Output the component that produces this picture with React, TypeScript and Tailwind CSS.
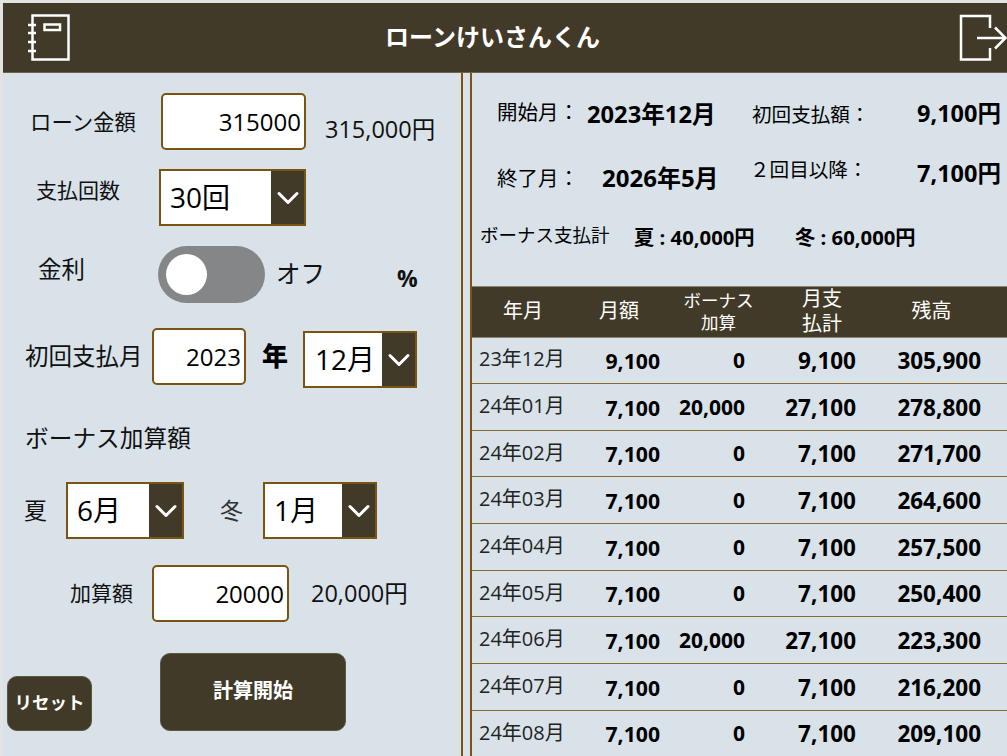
import React from 'react';
import { ChevronDown } from 'lucide-react';

const rows = [
  ['23年12月', '9,100', '0', '9,100', '305,900'],
  ['24年01月', '7,100', '20,000', '27,100', '278,800'],
  ['24年02月', '7,100', '0', '7,100', '271,700'],
  ['24年03月', '7,100', '0', '7,100', '264,600'],
  ['24年04月', '7,100', '0', '7,100', '257,500'],
  ['24年05月', '7,100', '0', '7,100', '250,400'],
  ['24年06月', '7,100', '20,000', '27,100', '223,300'],
  ['24年07月', '7,100', '0', '7,100', '216,200'],
  ['24年08月', '7,100', '0', '7,100', '209,100'],
];

const TextBox = ({ value, className }: { value: string; className: string }) => (
  <div className={`h-[57px] bg-white border-2 border-[#7b5412] rounded-[5px] flex items-center justify-end pr-[3px] text-[24px] text-black ${className}`}>
    {value}
  </div>
);

const Select = ({ value, className, pad }: { value: string; className: string; pad: string }) => (
  <div className={`h-[57px] bg-white border-2 border-[#7b5412] flex items-stretch text-[28px] text-black ${className}`}>
    <div className={`flex-1 flex items-center pb-[2px] ${pad}`}>{value}</div>
    <div className="w-[33px] bg-[#423a28] flex items-center justify-center">
      <ChevronDown size={36} strokeWidth={2} className="text-white shrink-0" />
    </div>
  </div>
);

export default function App() {
  return (
    <div
      className="w-[1007px] h-[756px] overflow-hidden bg-[#e3e3e3] pt-[3px] pl-[3px] text-black"
      style={{ fontFamily: '"Open Sans", "Noto Sans CJK JP", sans-serif' }}
    >
      {/* Header */}
      <header className="h-[70px] bg-[#423a28] border-b border-[#6b6350] flex items-center justify-between pl-[25px] text-white">
        <svg width="44" height="48" viewBox="0 0 44 48" fill="none" stroke="currentColor" strokeWidth="2.5">
          <rect x="4.5" y="1.5" width="36" height="44" />
          <rect x="16.5" y="10.5" width="15.5" height="5.5" />
          <path d="M0 11h8M0 19h8M0 28h8M0 37h8" />
        </svg>
        <h1 className="text-[24px] font-bold -ml-[46px] pb-[2px]">ローンけいさんくん</h1>
        <svg width="48" height="48" viewBox="0 0 48 48" fill="none" stroke="currentColor" strokeWidth="2.5">
          <path d="M31 14V2H2v43.5h29V34" />
          <path d="M18 24h28M36 13.5L46.5 24 36 34.5" />
        </svg>
      </header>

      <div className="flex h-[683px]">
        {/* Input panel */}
        <section className="w-[460px] shrink-0 bg-[#d9e2e9] border-r-2 border-[#7b5412] pt-[20px] text-[#111]">
          <div className="flex items-center h-[57px]">
            <span className="w-[158px] pl-[27px] text-[21.4px] mt-[2px]">ローン金額</span>
            <TextBox value="315000" className="w-[145px]" />
            <span className="ml-[19px] mt-[16px] text-[23.5px]">315,000円</span>
          </div>
          <div className="flex items-center h-[57px] mt-[19px]">
            <span className="w-[156px] pl-[33px] text-[21px] -mt-[13px]">支払回数</span>
            <Select value="30回" className="w-[147px]" pad="pl-[9px]" />
          </div>
          <div className="flex items-center h-[57px] mt-[20px]">
            <span className="w-[155px] pl-[35px] text-[23.5px] -mt-[10px]">金利</span>
            <div className="w-[107px] h-[57px] rounded-full bg-[#848688] flex items-center pl-[8px]">
              <div className="w-[41px] h-[41px] rounded-full bg-white" />
            </div>
            <span className="ml-[11px] w-[121px] text-[24.5px]">オフ</span>
            <span className="font-bold text-[23px] mt-[8px]">%</span>
          </div>
          <div className="flex items-center h-[60px] mt-[25px]">
            <span className="w-[149px] pl-[22px] text-[23.5px] -mt-[2px]">初回支払月</span>
            <TextBox value="2023" className="w-[94px] -mt-[3px]" />
            <span className="ml-[16px] w-[41px] font-extrabold text-[26px] -mt-[3px] text-black">年</span>
            <Select value="12月" className="w-[114px] mt-[3px]" pad="pl-[10px]" />
          </div>
          <div className="pl-[22px] mt-[34px] text-[23.7px] leading-[33px]">ボーナス加算額</div>
          <div className="flex items-center h-[57px] mt-[27px]">
            <span className="w-[63px] pl-[21px] text-[23px]">夏</span>
            <Select value="6月" className="w-[118px]" pad="pl-[9px]" />
            <span className="ml-[36px] w-[43px] text-[23px] text-[#333]">冬</span>
            <Select value="1月" className="w-[114px]" pad="pl-[9px]" />
          </div>
          <div className="flex items-center h-[57px] mt-[26px]">
            <span className="w-[149px] pl-[67px] text-[21px]">加算額</span>
            <TextBox value="20000" className="w-[137px]" />
            <span className="ml-[22px] text-[23.5px]">20,000円</span>
          </div>
          <div className="flex items-end mt-[31px] pl-[4px]">
            <button className="w-[85px] h-[55px] rounded-[10px] bg-[#423a28] border border-[#5c5543] text-white font-bold text-[17.5px] pb-[2px]">リセット</button>
            <button className="ml-[68px] w-[186px] h-[78px] rounded-[10px] bg-[#423a28] border border-[#5c5543] text-white font-bold text-[20px] pb-[2px]">計算開始</button>
          </div>
        </section>

        <div className="w-[7px] shrink-0 bg-[#d9e2e9]" />

        {/* Result panel */}
        <section className="flex-1 bg-[#d9e2e9] border-l-2 border-[#7b5412] overflow-hidden min-w-0">
          <div className="h-[213px]">
            <div className="flex items-center pt-[23px] whitespace-nowrap">
              <span className="ml-[25px] w-[90px] text-[20.5px] -mt-[4px]">開始月：</span>
              <span className="w-[165px] font-bold text-[23.7px]">2023年12月</span>
              <span className="w-[150px] text-[19.6px]">初回支払額：</span>
              <span className="w-[99px] text-right font-bold text-[23.5px] mb-[2px]">9,100円</span>
            </div>
            <div className="flex items-center mt-[19px] whitespace-nowrap">
              <span className="ml-[25px] w-[105px] text-[20.5px] mt-[8px]">終了月：</span>
              <span className="w-[148px] font-bold text-[24px] mt-[8px]">2026年5月</span>
              <span className="w-[154px] text-[19.6px] -mt-[10px]">２回目以降：</span>
              <span className="w-[97px] text-right font-bold text-[23.5px] mb-[2px]">7,100円</span>
            </div>
            <div className="flex items-center mt-[24px] pl-[8px] whitespace-nowrap">
              <span className="w-[154px] text-[18.5px] -mt-[3px]">ボーナス支払計</span>
              <span className="w-[161px] font-bold text-[20.3px] mt-[2px]">夏 : 40,000円</span>
              <span className="font-bold text-[20.3px] mt-[2px]">冬 : 60,000円</span>
            </div>
          </div>
          <div className="h-[51.5px] bg-[#423a28] flex items-center text-white text-[20px] text-center border-y border-[#8a8470] pb-[2px]">
            <span className="w-[102px]">年月</span>
            <span className="w-[90px]">月額</span>
            <span className="w-[109px] text-[17.5px] leading-[22px]">ボーナス<br />加算</span>
            <span className="w-[98px] leading-[25px]">月支<br />払計</span>
            <span className="w-[121px]">残高</span>
          </div>
          {rows.map((r) => (
            <div key={r[0]} className="h-[46.67px] flex items-center border-b border-[#8a6a2c]">
              <span className="w-[110px] pl-[7px] text-[20px] text-[#222] -mt-[2px]">{r[0]}</span>
              <span className="w-[78px] text-right font-bold text-[21.2px] mt-[1px]">{r[1]}</span>
              <span className="w-[85px] text-right font-bold text-[21px] mt-[1px]">{r[2]}</span>
              <span className="w-[111px] text-right font-bold text-[22.5px] mt-[1px]">{r[3]}</span>
              <span className="w-[125px] text-right font-bold text-[22.5px] mt-[1px]">{r[4]}</span>
            </div>
          ))}
        </section>
      </div>
    </div>
  );
}
